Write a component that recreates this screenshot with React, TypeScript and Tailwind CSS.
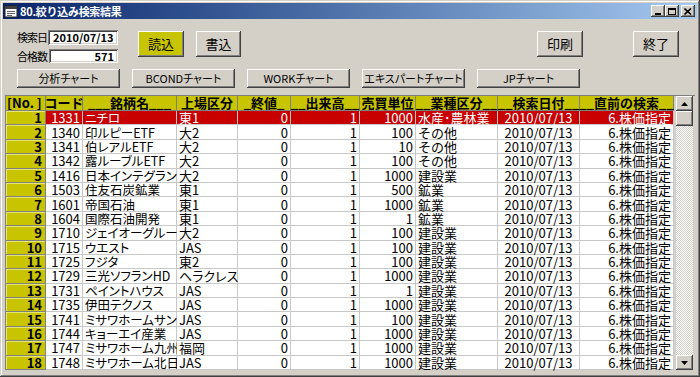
import React from "react";

const FONT = '"Noto Sans CJK JP", "Noto Sans", sans-serif';

type Row = [number, string, string, string, string, string, string, string];

const rows: Row[] = [
  [1, "1331", "ニチロ", "東1", "0", "1", "1000", "水産･農林業"],
  [2, "1340", "印ルピーETF", "大2", "0", "1", "100", "その他"],
  [3, "1341", "伯レアルETF", "大2", "0", "1", "10", "その他"],
  [4, "1342", "露ルーブルETF", "大2", "0", "1", "100", "その他"],
  [5, "1416", "日本インテグラン", "大2", "0", "1", "1000", "建設業"],
  [6, "1503", "住友石炭鉱業", "東1", "0", "1", "500", "鉱業"],
  [7, "1601", "帝国石油", "東1", "0", "1", "1000", "鉱業"],
  [8, "1604", "国際石油開発", "東1", "0", "1", "1", "鉱業"],
  [9, "1710", "ジェイオーグルー", "大2", "0", "1", "100", "建設業"],
  [10, "1715", "ウエスト", "JAS", "0", "1", "100", "建設業"],
  [11, "1725", "フジタ", "東2", "0", "1", "100", "建設業"],
  [12, "1729", "三光ソフランHD", "ヘラクレス", "0", "1", "1000", "建設業"],
  [13, "1731", "ペイントハウス", "JAS", "0", "1", "1", "建設業"],
  [14, "1735", "伊田テクノス", "JAS", "0", "1", "1000", "建設業"],
  [15, "1741", "ミサワホームサン", "JAS", "0", "1", "100", "建設業"],
  [16, "1744", "キョーエイ産業", "JAS", "0", "1", "1000", "建設業"],
  [17, "1747", "ミサワホーム九州", "福岡", "0", "1", "1000", "建設業"],
  [18, "1748", "ミサワホーム北日", "JAS", "0", "1", "1000", "建設業"],
];

const raised =
  "bg-[#d4d0c8] shadow-[inset_-1px_-1px_#404040,inset_1px_1px_#ffffff,inset_-2px_-2px_#808080,inset_2px_2px_#d4d0c8]";
const sunken =
  "bg-white shadow-[inset_1px_1px_#808080,inset_-1px_-1px_#ffffff,inset_2px_2px_#404040,inset_-2px_-2px_#d4d0c8]";

function WinBtn({ children, className = "" }: { children: React.ReactNode; className?: string }) {
  return (
    <div className={`w-[14px] h-[12px] flex items-center justify-center ${raised} ${className}`}>{children}</div>
  );
}

function ChartBtn({ label }: { label: string }) {
  return (
    <div
      className={`w-[103px] h-[19px] flex items-center justify-center whitespace-nowrap text-[11px] [font-feature-settings:'palt'] leading-none text-black ${raised}`}
    >
      {label}
    </div>
  );
}

const headerCells = [
  "[No. ]",
  "コード",
  "___銘柄名___",
  "上場区分",
  "_終値_",
  "__出来高__",
  "売買単位",
  "__業種区分__",
  "__検索日付__",
  "__直前の検索__",
];

const aligns = [
  "justify-end",
  "justify-end",
  "justify-start [font-feature-settings:'palt'] text-[12.5px]",
  "justify-start [font-feature-settings:'palt']",
  "justify-end",
  "justify-end",
  "justify-end",
  "justify-start",
  "justify-center",
  "justify-end",
];

export default function App() {
  return (
    <div
      className="w-[700px] h-[377px] bg-[#d4d0c8] p-[3px] flex flex-col overflow-hidden shadow-[inset_-1px_-1px_#404040,inset_1px_1px_#d4d0c8,inset_-2px_-2px_#808080,inset_2px_2px_#ffffff]"
      style={{ fontFamily: FONT }}
    >
      {/* Title bar */}
      <div className="h-[16px] flex items-center bg-linear-to-r from-[#0a246a] to-[#a6caf0] pl-[1px] pr-[2px]">
        <svg width="14" height="13" viewBox="0 0 14 13" className="shrink-0">
          <rect x="1" y="1" width="12" height="11" fill="#ffffff" stroke="#202020" />
          <rect x="1" y="1" width="12" height="3" fill="#404040" />
          <rect x="3" y="6" width="8" height="1" fill="#606060" />
          <rect x="3" y="8" width="8" height="1" fill="#606060" />
          <rect x="3" y="10" width="5" height="1" fill="#606060" />
        </svg>
        <span className="ml-[2px] text-[11px] font-bold text-white leading-none tracking-tight">
          80.絞り込み検索結果
        </span>
        <div className="ml-auto flex items-center">
          <WinBtn>
            <div className="w-[6px] h-[2px] bg-black mt-[5px]" />
          </WinBtn>
          <WinBtn>
            <div className="w-[8px] h-[7px] border border-black border-t-2" />
          </WinBtn>
          <WinBtn className="ml-[2px]">
            <svg width="8" height="7" viewBox="0 0 8 7">
              <path d="M0.5 0.5 L7 6.5 M7 0.5 L0.5 6.5" stroke="#000" strokeWidth="1.6" />
            </svg>
          </WinBtn>
        </div>
      </div>

      {/* Top controls */}
      <div className="flex items-start pl-[14px] pr-[18px] mt-[11px]">
        <div className="flex flex-col gap-[4px] text-[11px] text-black">
          <div className="flex items-center h-[15px]">
            <span className="w-[31px] tracking-[-1px]">検索日</span>
            <div className={`w-[70px] h-[15px] flex items-center pl-[5px] text-[11px] font-bold ${sunken}`}>
              2010/07/13
            </div>
          </div>
          <div className="flex items-center h-[14px]">
            <span className="w-[32px] tracking-[-1px]">合格数</span>
            <div className={`w-[69px] h-[14px] flex items-center justify-end pr-[4px] text-[11px] font-bold ${sunken}`}>
              571
            </div>
          </div>
        </div>
        <div
          className={`ml-[20px] mt-[1px] w-[46px] h-[26px] flex items-center justify-center text-[13px] bg-[#c8c400] shadow-[inset_-1px_-1px_#404040,inset_1px_1px_#ffffff,inset_-2px_-2px_#808080]`}
        >
          読込
        </div>
        <div className={`ml-[12px] mt-[1px] w-[45px] h-[26px] flex items-center justify-center text-[13px] ${raised}`}>
          書込
        </div>
        <div className={`ml-auto mt-[1px] w-[46px] h-[26px] flex items-center justify-center text-[13px] ${raised}`}>
          印刷
        </div>
        <div className={`ml-[50px] mt-[1px] w-[46px] h-[26px] flex items-center justify-center text-[13px] ${raised}`}>
          終了
        </div>
      </div>

      {/* Chart buttons */}
      <div className="flex items-center gap-[12px] pl-[14px] mt-[6px]">
        <ChartBtn label="分析チャート" />
        <ChartBtn label="BCONDチャート" />
        <ChartBtn label="WORKチャート" />
        <ChartBtn label="エキスパートチャート" />
        <ChartBtn label="JPチャート" />
      </div>

      {/* Table */}
      <div className="flex mt-[7px] ml-[2px] mr-[2px] h-[275px] border-l border-t border-[#808080]">
        <div className="grid grid-cols-[40px_37px_94px_61px_53px_69px_56px_82px_82px_94px] grid-rows-[15px_repeat(18,14.4px)] text-[13px] leading-[13px] bg-white">
          {headerCells.map((h, i) => (
            <div
              key={"h" + i}
              className={`flex items-start pt-[1px] leading-[11px] ${i === 0 ? "justify-start pl-[1px]" : "justify-center"} whitespace-nowrap bg-[#c8c400] font-bold text-black border-r border-b border-[#808080]`}
            >
              {h}
            </div>
          ))}
          {rows.map((r, ri) => {
            const sel = ri === 0;
            const cells = [String(r[0]), r[1], r[2], r[3], r[4], r[5], r[6], r[7], "2010/07/13", "6.株価指定"];
            return cells.map((c, ci) => {
              if (ci === 0) {
                return (
                  <div
                    key={ri + "-" + ci}
                    className="flex items-center justify-end pr-[3px] bg-[#c8c400] font-bold text-black border-r border-b border-[#808080] shadow-[inset_1px_1px_#e8e670]"
                  >
                    {c}
                  </div>
                );
              }
              return (
                <div
                  key={ri + "-" + ci}
                  className={`flex items-center ${aligns[ci]} px-[2px] whitespace-nowrap border-r border-b border-[#c8c8c8] ${
                    sel ? "bg-[#c80000] text-white" : "bg-white text-black"
                  }`}
                >
                  {c}
                </div>
              );
            });
          })}
        </div>
        {/* Scrollbar */}
        <div className="ml-[2px] w-[17px] h-full flex flex-col bg-[repeating-conic-gradient(#ffffff_0_25%,#d4d0c8_0_50%)] bg-[length:2px_2px]">
          <div className={`h-[15px] flex items-center justify-center ${raised}`}>
            <svg width="7" height="4" viewBox="0 0 7 4">
              <path d="M3.5 0 L7 4 L0 4 Z" fill="#000" />
            </svg>
          </div>
          <div className={`h-[15px] ${raised}`} />
          <div className="flex-1" />
          <div className={`h-[15px] flex items-center justify-center ${raised}`}>
            <svg width="7" height="4" viewBox="0 0 7 4">
              <path d="M0 0 L7 0 L3.5 4 Z" fill="#000" />
            </svg>
          </div>
        </div>
      </div>
    </div>
  );
}
